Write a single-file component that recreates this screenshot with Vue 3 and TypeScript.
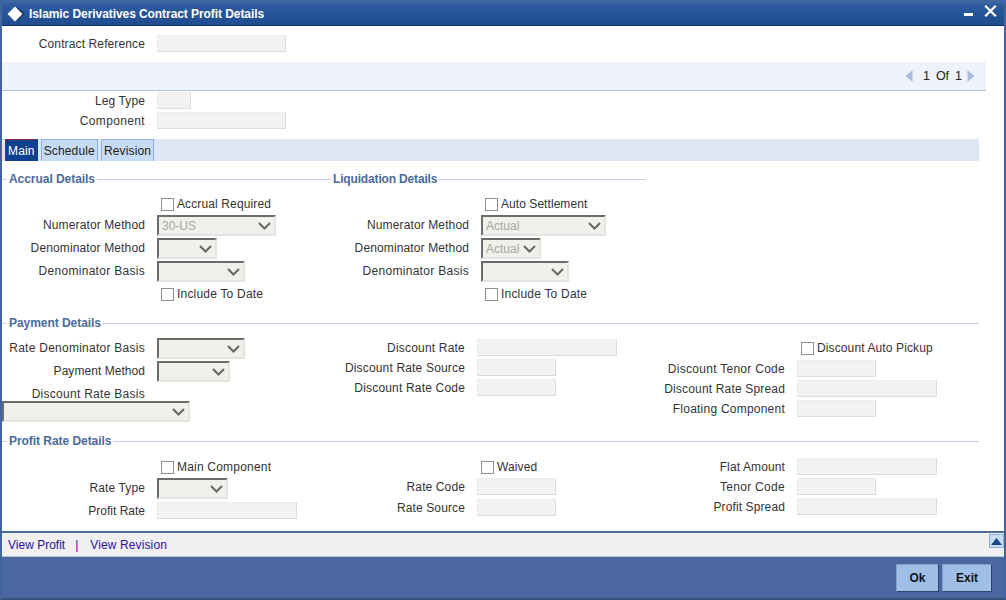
<script setup lang="ts">
type Row = {
  kind: 'check' | 'select' | 'input' | 'stacked'
  label: string
  w?: number
  mt: number
  value?: string
}
type Col = { legend?: string; cls: string; rows: Row[] }

const check = (label: string, mt: number): Row => ({ kind: 'check', label, mt })
const sel = (label: string, w: number, mt: number, value = ''): Row => ({ kind: 'select', label, w, mt, value })
const inp = (label: string, w: number, mt: number): Row => ({ kind: 'input', label, w, mt })

const tracking: Record<string, number> = {
  'Denominator Basis': 0.3,
  'Rate Denominator Basis': 0.26,
  'Discount Rate Basis': 0.28,
  'Discount Tenor Code': 0.28,
  'Discount Rate Spread': 0.17,
  'Discount Rate Source': 0.17,
  'Discount Rate Code': 0.18,
  'Discount Rate': 0.2,
  'Floating Component': 0.23,
  'Profit Rate': 0,
  'Payment Method': 0.05,
  'Tenor Code': 0.3,
  Component: 0.35,
  'Denominator Method': 0.13,
  'Include To Date': 0.2,
  'Auto Settlement': 0.06,
  'Main Component': 0.2,
}
const spacing = (label: string) => ({ letterSpacing: (tracking[label] ?? 0.12) + 'px' })

const topSection: Col[] = [
  {
    legend: 'Accrual Details',
    cls: 'col-a',
    rows: [
      check('Accrual Required', 11),
      sel('Numerator Method', 119, 4, '30-US'),
      sel('Denominator Method', 60, 2),
      sel('Denominator Basis', 88, 2),
      check('Include To Date', 5),
    ],
  },
  {
    legend: 'Liquidation Details',
    cls: 'col-b',
    rows: [
      check('Auto Settlement', 11),
      sel('Numerator Method', 125, 4, 'Actual'),
      sel('Denominator Method', 60, 2, 'Actual'),
      sel('Denominator Basis', 88, 2),
      check('Include To Date', 5),
    ],
  },
]
const paymentCols: Col[] = [
  {
    cls: 'col-n',
    rows: [
      sel('Rate Denominator Basis', 88, 8),
      sel('Payment Method', 73, 2),
      { kind: 'stacked', label: 'Discount Rate Basis', w: 188, mt: 5 },
    ],
  },
  {
    cls: 'col-n',
    rows: [inp('Discount Rate', 140, 9), inp('Discount Rate Source', 79, 3), inp('Discount Rate Code', 79, 3)],
  },
  {
    cls: 'col-n',
    rows: [
      check('Discount Auto Pickup', 11),
      inp('Discount Tenor Code', 79, 5),
      inp('Discount Rate Spread', 140, 3),
      inp('Floating Component', 79, 3),
    ],
  },
]
const profitCols: Col[] = [
  {
    cls: 'col-n',
    rows: [check('Main Component', 12), sel('Rate Type', 71, 4), inp('Profit Rate', 140, 3)],
  },
  {
    cls: 'col-n',
    rows: [check('Waived', 12), inp('Rate Code', 79, 4), inp('Rate Source', 79, 4)],
  },
  {
    cls: 'col-n',
    rows: [inp('Flat Amount', 140, 10), inp('Tenor Code', 79, 3), inp('Profit Spread', 140, 3)],
  },
]
const sections = [
  { title: '', cls: 'sec-top', cols: topSection },
  { title: 'Payment Details', cls: 'sec-pay', cols: paymentCols },
  { title: 'Profit Rate Details', cls: 'sec-profit', cols: profitCols },
]
const tabs = ['Main', 'Schedule', 'Revision']
</script>

<template>
  <div class="window">
    <header class="titlebar">
      <svg class="diamond" width="18" height="16" viewBox="0 0 18 16">
        <path d="M10 1 L17.5 8 L10 15 Z" fill="#16315f" />
        <path d="M8 0.5 L15.5 8 L8 15.5 L0.5 8 Z" fill="#fff" />
      </svg>
      <h1 class="title">Islamic Derivatives Contract Profit Details</h1>
      <div class="win-actions">
        <span class="min"></span>
        <svg width="13" height="12" viewBox="0 0 13 12">
          <path d="M1.2 0.8 L11.8 11.2 M11.8 0.8 L1.2 11.2" stroke="#fff" stroke-width="2.2" fill="none" />
        </svg>
      </div>
    </header>

    <main class="content">
      <div class="row contract">
        <label class="lbl">Contract Reference</label>
        <input class="txt w129" disabled />
      </div>

      <div class="pager">
        <svg width="8" height="12" viewBox="0 0 8 12"><path d="M7.5 0 V12 L0.5 6 Z" fill="#a9bcdc" /></svg>
        <span class="pager-text">1&nbsp; Of &nbsp;1</span>
        <svg width="8" height="12" viewBox="0 0 8 12"><path d="M0.5 0 V12 L7.5 6 Z" fill="#a9bcdc" /></svg>
      </div>

      <div class="leg">
        <div class="row">
          <label class="lbl">Leg Type</label>
          <input class="txt w34" disabled />
        </div>
        <div class="row">
          <label class="lbl" :style="spacing('Component')">Component</label>
          <input class="txt w129" disabled />
        </div>
      </div>

      <nav class="tabs">
        <span v-for="(t, i) in tabs" :key="t" class="tab" :class="{ active: i === 0 }">{{ t }}</span>
      </nav>

      <section v-for="s in sections" :key="s.cls" class="section" :class="s.cls">
        <div v-if="s.title" class="legend">
          <span class="legend-text">{{ s.title }}</span>
        </div>
        <div class="cols">
          <div v-for="(c, ci) in s.cols" :key="ci" class="col" :class="c.cls">
            <div v-if="c.legend" class="legend">
              <span class="legend-text" :class="{ tight: ci === 1 }">{{ c.legend }}</span>
            </div>
            <template v-for="r in c.rows" :key="r.label">
              <div v-if="r.kind === 'check'" class="row check-row" :style="{ marginTop: r.mt + 'px' }">
                <span class="box"></span>
                <span class="check-label" :style="spacing(r.label)">{{ r.label }}</span>
              </div>
              <div v-else-if="r.kind === 'stacked'" class="stacked" :style="{ marginTop: r.mt + 'px' }">
                <label class="lbl stacked-lbl" :style="spacing(r.label)">{{ r.label }}</label>
                <div class="select" :style="{ width: r.w + 'px' }">
                  <span class="sel-val"></span>
                  <svg class="chev" width="13" height="8" viewBox="0 0 13 8"><path d="M1 1 L6.5 6.5 L12 1" stroke="#666" stroke-width="2" fill="none" /></svg>
                </div>
              </div>
              <div v-else class="row" :class="{ 'sel-row': r.kind === 'select' }" :style="{ marginTop: r.mt + 'px' }">
                <label class="lbl" :style="spacing(r.label)">{{ r.label }}</label>
                <div v-if="r.kind === 'select'" class="select" :style="{ width: r.w + 'px' }">
                  <span class="sel-val">{{ r.value }}</span>
                  <svg class="chev" width="13" height="8" viewBox="0 0 13 8"><path d="M1 1 L6.5 6.5 L12 1" stroke="#666" stroke-width="2" fill="none" /></svg>
                </div>
                <input v-else class="txt" :style="{ width: r.w + 'px' }" disabled />
              </div>
            </template>
          </div>
        </div>
      </section>
    </main>

    <div class="links">
      <a class="link">View Profit</a>
      <span class="sep">|</span>
      <a class="link revision">View Revision</a>
      <span class="up">
        <svg width="11" height="7" viewBox="0 0 11 7"><path d="M5.5 0 L11 7 H0 Z" fill="#1c4583" /></svg>
      </span>
    </div>

    <footer class="actions">
      <button class="btn ok">Ok</button>
      <button class="btn exit">Exit</button>
    </footer>
  </div>
</template>

<style>
html, body { margin: 0; background: #fff; }
</style>

<style scoped>
.window {
  width: 1006px;
  height: 600px;
  box-sizing: border-box;
  display: flex;
  flex-direction: column;
  border-left: 2px solid #41659f;
  border-right: 2px solid #41659f;
  border-bottom: 2px solid #35527f;
  font-family: "Liberation Sans", Arial, sans-serif;
  font-size: 12px;
  color: #333;
  overflow: hidden;
}
.titlebar {
  flex: none;
  height: 26px;
  box-sizing: border-box;
  margin: 0 -2px;
  padding: 3px 9px 0 7px;
  display: flex;
  align-items: center;
  background: linear-gradient(#3d66a3 0, #3d66a3 3px, #2f5c9f 4px, #1e4c8e 25px);
  border-bottom: 1px solid #15305c;
}
.diamond { flex: none; }
.title {
  margin: 0 0 0 4px;
  font-size: 12px;
  font-weight: bold;
  color: #fff;
  flex: 1;
  letter-spacing: -0.07px;
}
.win-actions { display: flex; align-items: center; gap: 11px; margin-top: -6px; }
.min { width: 9px; height: 3px; background: #fff; margin-top: 6px; }
.content { flex: none; height: 505px; background: #fff; overflow: hidden; }
.row { display: flex; align-items: center; height: 17px; }
.sel-row { height: 21px; }
.sel-row .lbl { padding-bottom: 2px; }
.contract { margin-top: 9px; }
.lbl {
  flex: none;
  width: 143px;
  margin-right: 12px;
  text-align: right;
  white-space: nowrap;
  letter-spacing: 0.12px;
}
.txt {
  display: block;
  box-sizing: border-box;
  height: 17px;
  padding: 0;
  background: #f2f2f2;
  border: 1px solid #ececec;
  border-right-color: #dcdcdc;
  border-bottom-color: #dcdcdc;
  outline: none;
}
.w129 { width: 129px; }
.w34 { width: 34px; }
.pager {
  margin-top: 10px;
  height: 29px;
  box-sizing: border-box;
  width: 984px;
  display: flex;
  align-items: center;
  justify-content: flex-end;
  gap: 7px;
  padding-right: 11px;
  background: #eff1fb;
  border-bottom: 1px solid #b3c1da;
}
.pager-text { color: #222; font-size: 12.5px; word-spacing: -0.5px; margin: 0 -2px 0 3px; }
.leg { margin-top: 1px; display: flex; flex-direction: column; gap: 3px; }
.tabs {
  margin-top: 10px;
  width: 977px;
  box-sizing: border-box;
  height: 22px;
  display: flex;
  gap: 3px;
  padding-left: 3px;
  background: #dde6f5;
}
.tab {
  box-sizing: border-box;
  height: 22px;
  padding: 0 2px;
  line-height: 22px;
  background: #c6dbf5;
  border: 1px solid #8fb0d8;
  border-bottom: none;
  color: #222;
  letter-spacing: 0.15px;
}
.tab.active {
  background: #0f3f8f;
  color: #fff;
  border-color: #7a2d45 #0f3f8f #0f3f8f #7a2d45;
}
.section { box-sizing: border-box; }
.sec-top { margin-top: 11px; height: 144px; }
.sec-pay { height: 118px; }
.cols { display: flex; }
.col { flex: none; display: flex; flex-direction: column; }
.col-a { width: 324px; }
.col-b { width: 320px; }
.col-n { width: 320px; }
.legend {
  height: 14px;
  display: flex;
  align-items: center;
  width: 977px;
}
.col .legend { width: auto; }
.legend::before {
  content: "";
  width: 5px;
  margin-right: 2px;
  border-top: 1px solid #c6d0e4;
}
.legend::after {
  content: "";
  flex: 1;
  margin-left: 2px;
  border-top: 1px solid #c6d0e4;
}
.legend-text {
  font-weight: bold;
  color: #4a6a9c;
  letter-spacing: -0.05px;
}
.legend-text.tight { letter-spacing: -0.16px; }
.check-row { height: 14px; padding-left: 159px; }
.box {
  flex: none;
  box-sizing: border-box;
  width: 13px;
  height: 13px;
  background: #fff;
  border: 1px solid #8f8f8f;
  margin-right: 3px;
}
.check-label { white-space: nowrap; letter-spacing: 0.12px; }
.select {
  position: relative;
  flex: none;
  box-sizing: border-box;
  height: 21px;
  background: #f1f0ea;
  border-style: solid;
  border-width: 2px;
  border-color: #6b6b6b #e3e3df #e3e3df #6b6b6b;
  display: flex;
  align-items: center;
  justify-content: space-between;
  padding: 0 3px 0 0;
}
.sel-val { color: #a6a6a6; padding-left: 3px; }
.chev { flex: none; }
.stacked { display: flex; flex-direction: column; }
.stacked-lbl { height: 14px; line-height: 14px; }
.links {
  flex: none;
  height: 26px;
  box-sizing: border-box;
  background: #f0f0f0;
  border-top: 2px solid #4d6c9a;
  border-bottom: 1px solid #b9c6da;
  display: flex;
  align-items: center;
  padding-left: 6px;
  position: relative;
}
.link { color: #2a10a8; }
.revision { letter-spacing: 0.12px; }
.sep { color: #2a10a8; margin: 0 12px 0 10px; }
.up {
  position: absolute;
  right: 0;
  top: 1px;
  width: 15px;
  height: 14px;
  box-sizing: border-box;
  background: #c6dbf5;
  border: 1px solid #8fb0d8;
  display: flex;
  align-items: center;
  justify-content: center;
}
.actions {
  flex: none;
  height: 41px;
  box-sizing: border-box;
  background: #4a689f;
  display: flex;
  justify-content: flex-end;
  align-items: flex-start;
  gap: 3px;
  padding: 7px 12px 0 0;
}
.btn {
  height: 28px;
  padding: 0;
  box-sizing: border-box;
  background: #a0bfe6;
  border: 1px solid;
  border-color: #7da0cf #2c4467 #2c4467 #7da0cf;
  color: #111;
  font: bold 12px "Liberation Sans", Arial, sans-serif;
}
.ok { width: 43px; }
.exit { width: 50px; }
</style>
